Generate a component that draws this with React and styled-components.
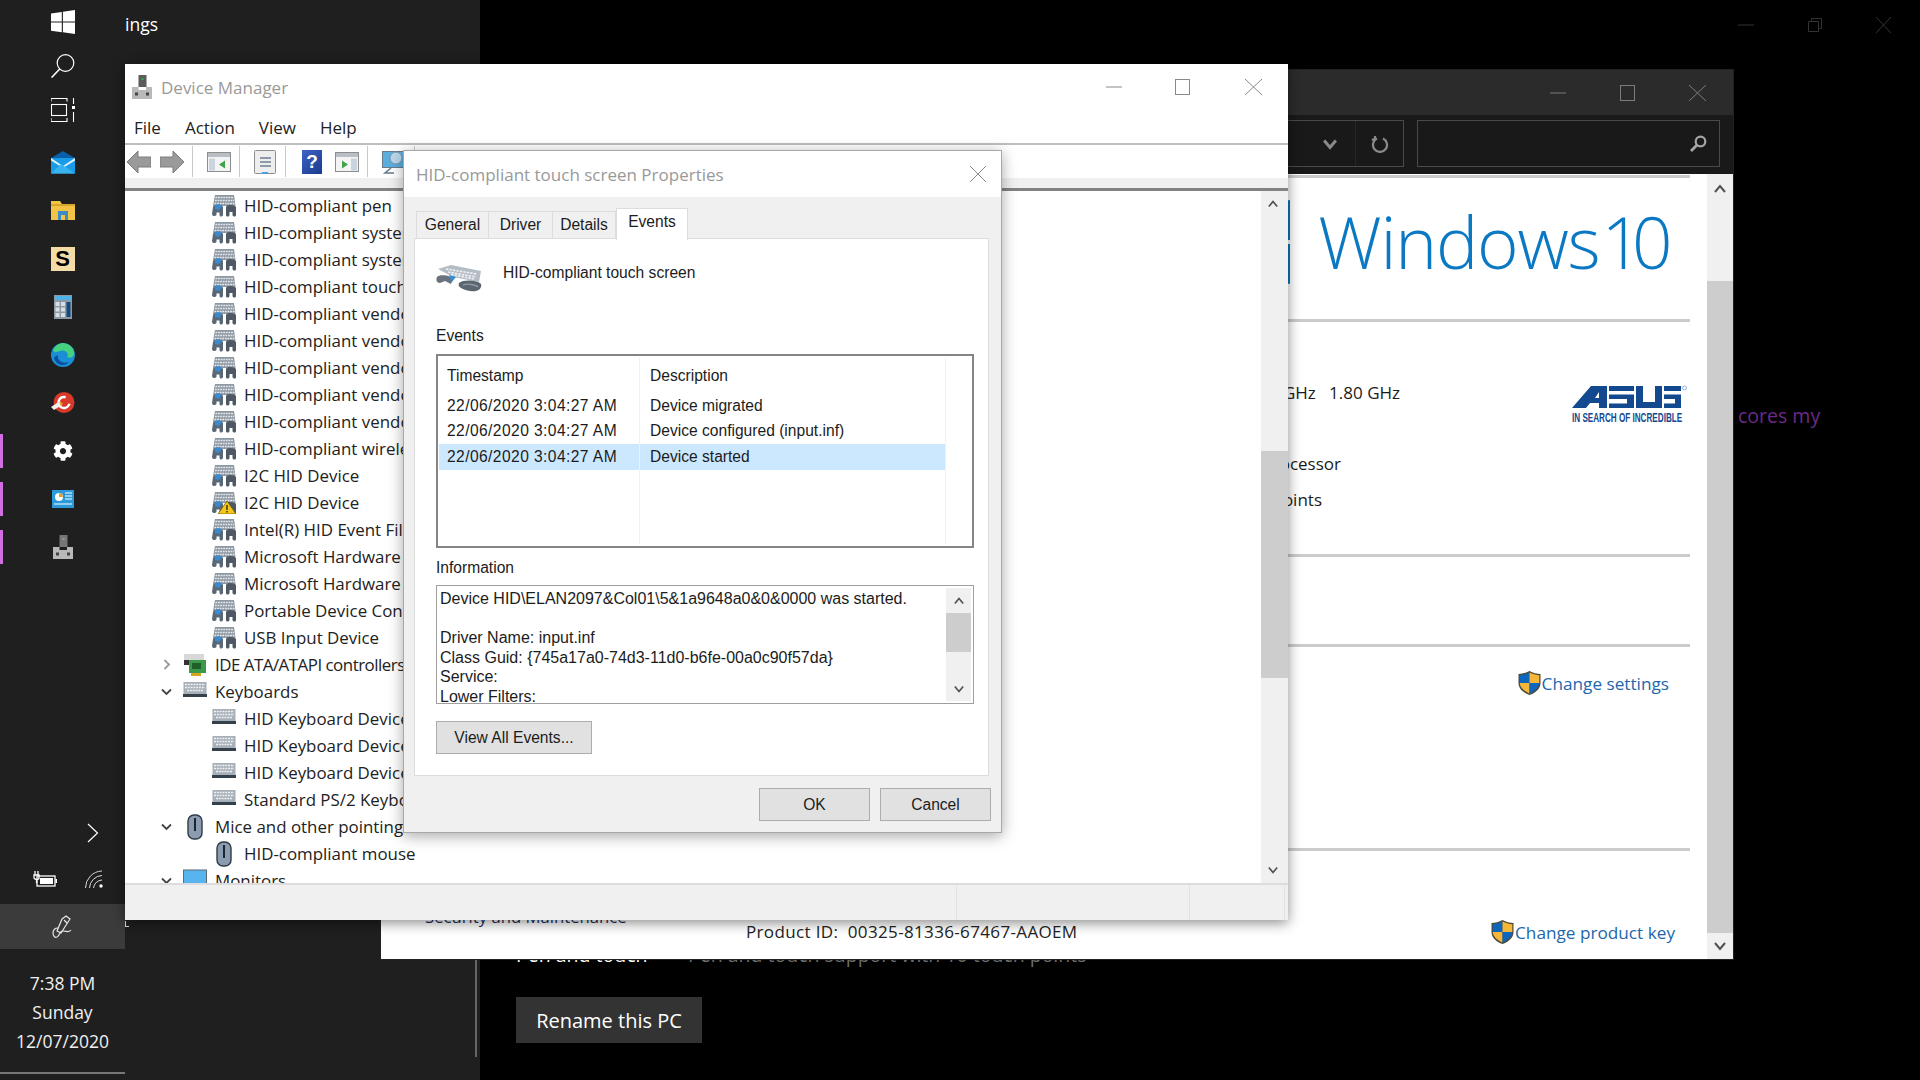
import React from 'react';
import styled, { createGlobalStyle } from 'styled-components';
import { FaCog } from 'react-icons/fa';

const GlobalStyle = createGlobalStyle`
  html, body {
    margin: 0;
    padding: 0;
    background: #000;
    overflow: hidden;
  }
  * {
    box-sizing: border-box;
  }
`;

const uiFont = `'Open Sans', 'Noto Sans', sans-serif`;
const dlgFont = `'Liberation Sans', Arial, sans-serif`;

const Desktop = styled.div`
  position: relative;
  display: flex;
  width: 1920px;
  height: 1080px;
  overflow: hidden;
  background: #000;
  font-family: ${uiFont};
`;

/* left taskbar */
const Taskbar = styled.div`
  display: flex;
  flex-direction: column;
  flex: 0 0 125px;
  background: #1f1f1f;
  color: #fff;
`;

const TaskItem = styled.div`
  position: relative;
  display: flex;
  align-items: center;
  justify-content: center;
  height: ${p => p.$h || 48}px;
  margin-top: ${p => p.$mt || 0}px;
  &::before {
    content: '';
    display: ${p => (p.$open ? 'block' : 'none')};
    position: absolute;
    left: 0;
    top: 7px;
    width: 3px;
    height: 34px;
    background: #d26fe0;
  }
`;

const ScrabbleTile = styled.span`
  display: flex;
  align-items: center;
  justify-content: center;
  width: 24px;
  height: 24px;
  background: #f3dca6;
  color: #000;
  font: bold 22px ${dlgFont};
`;

const TraySpacer = styled.div`
  flex: 1;
`;

const ExpandRow = styled.div`
  display: flex;
  justify-content: flex-end;
  padding-right: 26px;
  height: 24px;
  margin-top: 1px;
  align-items: center;
`;

const TrayRow = styled.div`
  display: flex;
  justify-content: space-between;
  align-items: center;
  padding: 0 22px 0 33px;
  margin-top: 22px;
  height: 24px;
`;

const PenButton = styled.div`
  display: flex;
  align-items: center;
  justify-content: center;
  height: 45px;
  margin-top: 13px;
  background: #3b3b3b;
`;

const Clock = styled.div`
  display: flex;
  flex-direction: column;
  align-items: center;
  padding-top: 20px;
  height: 123px;
  font-size: 17.5px;
  line-height: 29px;
  color: #f0f0f0;
`;

const ClockRule = styled.div`
  height: 2px;
  margin-bottom: 6px;
  background: #777;
`;

/* settings sidebar behind the windows */
const SettingsNav = styled.div`
  position: relative;
  flex: 0 0 355px;
  background: #1f1f1f;
  color: #fff;
`;

const NavTitle = styled.div`
  padding-top: 10px;
  font-size: 17.5px;
  line-height: 28px;
`;

const NavCrumb = styled.div`
  position: absolute;
  left: 0;
  top: 921px;
  width: 4px;
  height: 6px;
  border-left: 1px solid #ddd;
  border-bottom: 1px solid #ddd;
`;

const NavRule = styled.div`
  position: absolute;
  right: 3px;
  bottom: 23px;
  width: 2px;
  height: 110px;
  background: #666;
`;

const SettingsMain = styled.div`
  flex: 1;
  display: flex;
  flex-direction: column;
  padding-left: 36px;
  color: #fff;
`;

const MainControls = styled.div`
  display: flex;
  justify-content: flex-end;
  align-items: center;
  gap: 54px;
  height: 50px;
  padding-right: 29px;
  color: #333;
`;

const CoresNote = styled.div`
  margin: 352px 0 0 1222px;
  font-size: 19.5px;
  line-height: 28px;
  color: #6b2a8a;
  white-space: nowrap;
`;

const SpecLine = styled.div`
  display: flex;
  margin-top: 510px;
  height: 28px;
  align-items: center;
  font-size: 19.5px;
  white-space: nowrap;
`;

const SpecKey = styled.span`
  width: 172px;
`;

const SpecValue = styled.span`
  color: #6e6e6e;
`;

const RenameButton = styled.div`
  display: flex;
  align-items: center;
  justify-content: center;
  width: 186px;
  height: 46px;
  margin-top: 29px;
  background: #333;
  font-size: 20px;
`;

/* system window */
const SystemWindow = styled.div`
  position: absolute;
  left: 381px;
  top: 70px;
  width: 1352px;
  height: 889px;
  display: flex;
  flex-direction: column;
  background: #fff;
  box-shadow: 0 0 0 1px #222;
`;

const DarkTitle = styled.div`
  display: flex;
  justify-content: flex-end;
  align-items: center;
  gap: 54px;
  height: 45px;
  padding-right: 27px;
  background: #2b2b2b;
  color: #7c7c7c;
`;

const AddressBar = styled.div`
  display: flex;
  justify-content: flex-end;
  align-items: center;
  gap: 13px;
  height: 59px;
  padding: 0 13px 2px 0;
  background: #191919;
`;

const AddressBox = styled.div`
  display: flex;
  justify-content: flex-end;
  align-items: center;
  width: 900px;
  height: 47px;
  border: 1px solid #4a4a4a;
  color: #8a8a8a;
`;

const AddressButton = styled.div`
  display: flex;
  align-items: center;
  justify-content: center;
  width: ${p => p.$w}px;
  height: 100%;
  border-left: ${p => (p.$split ? '1px solid #262626' : '0')};
`;

const SearchBox = styled(AddressBox)`
  width: 303px;
  padding-right: 12px;
`;

const SystemBody = styled.div`
  flex: 1;
  display: flex;
  min-height: 0;
`;

const SystemContent = styled.div`
  flex: 1;
  display: flex;
  flex-direction: column;
  padding: 1px 17px 0 0;
`;

const SystemSection = styled.div`
  display: flex;
  height: ${p => p.$h}px;
  flex: ${p => (p.$grow ? 1 : 'none')};
  border-top: 3px solid #cbcbcb;
`;

const BrandRow = styled(SystemSection)`
  justify-content: flex-end;
  align-items: center;
  gap: 28px;
  padding: 0 20px 14px 0;
`;

const BrandText = styled.div`
  display: flex;
  font-weight: 300;
  font-size: 71px;
  letter-spacing: -1.2px;
  line-height: 80px;
  color: #0a78c2;
  white-space: nowrap;
`;

const BrandNumber = styled.span`
  margin-left: 2px;
  letter-spacing: -10px;
  margin-right: 7.5px;
`;

const FactsColumn = styled.div`
  flex: 1;
  display: flex;
  flex-direction: column;
  padding-top: 58px;
  font-size: 17px;
  color: #1b1b1b;
`;

const FactRow = styled.div`
  width: ${p => p.$end}px;
  height: 26px;
  margin-bottom: ${p => p.$mb || 0}px;
  line-height: 26px;
  text-align: right;
  white-space: nowrap;
`;

const AsusBlock = styled.div`
  display: flex;
  flex-direction: column;
  width: 118px;
  margin: 63px 0 0 0;
  color: #12498f;
`;

const AsusTagline = styled.span`
  display: block;
  width: 110px;
  margin-top: 3px;
  font: bold 12.5px/12px ${dlgFont};
  white-space: nowrap;
  transform: scaleX(0.65);
  transform-origin: left center;
`;

const LinkRow = styled.div`
  display: flex;
  justify-content: flex-end;
  align-items: center;
  gap: 1px;
  height: 28px;
  margin-left: auto;
  margin-right: ${p => p.$right}px;
  margin-top: ${p => p.$top}px;
  color: #2166ad;
  font-size: 17.2px;
  white-space: nowrap;
`;

const ProductBlock = styled.div`
  display: flex;
  flex-direction: column;
  padding: 53px 0 0 44px;
  font-size: 17px;
  color: #232323;
`;

const SecurityText = styled.span`
  color: #27305a;
  font-size: 16.7px;
  line-height: 26px;
  height: 16px;
`;

const ProductText = styled.span`
  margin-left: 321px;
  letter-spacing: 0.35px;
  white-space: nowrap;
`;

const PageScrollbar = styled.div`
  display: flex;
  flex-direction: column;
  flex: 0 0 26px;
  background: #f0f0f0;
  color: #505050;
`;

const ScrollArrow = styled.div`
  display: flex;
  align-items: center;
  justify-content: center;
  flex: 0 0 ${p => p.$h || 26}px;
  padding-right: ${p => p.$shift || 0}px;
`;

const ScrollTrack = styled.div`
  flex: 1;
  padding-top: ${p => p.$top || 0}px;
  padding-bottom: ${p => p.$bottom || 0}px;
  display: flex;
`;

const ScrollThumb = styled.div`
  flex: 1;
  background: #cdcdcd;
`;

/* device manager */
const DeviceWindow = styled.div`
  position: absolute;
  left: 125px;
  top: 64px;
  width: 1163px;
  height: 856px;
  display: flex;
  flex-direction: column;
  background: #fff;
  box-shadow: 0 3px 12px rgba(0, 0, 0, 0.45);
`;

const LightTitle = styled.div`
  display: flex;
  align-items: center;
  height: ${p => p.$h}px;
  padding-left: ${p => p.$pad}px;
  flex: none;
  color: #999;
  font-size: 17px;
  background: #fff;
  white-space: nowrap;
`;

const TitleText = styled.span`
  flex: 1;
  margin-left: 9px;
`;

const WinControls = styled.div`
  display: flex;
  align-items: center;
  gap: 53px;
  padding-right: ${p => p.$right}px;
  color: #8a8a8a;
`;

const CloseSlot = styled.span`
  display: flex;
  margin-left: ${p => p.$lead || 0}px;
`;

const MenuBar = styled.div`
  display: flex;
  align-items: center;
  height: 33px;
  padding: 1px 0 0 9px;
  gap: 24px;
  font-size: 17px;
  color: #222;
`;

const Toolbar = styled.div`
  display: flex;
  align-items: center;
  flex: none;
  height: 35px;
  padding-left: 2px;
  border-top: 2px solid #bdbdbd;
`;

const ToolGroup = styled.div`
  display: flex;
  align-items: center;
  gap: ${p => p.$gap || 13}px;
  height: 31px;
  padding-right: ${p => p.$pad || 8}px;
  margin-right: 14px;
  border-right: 1px solid #c9c9c9;
`;

const HelpTile = styled.span`
  display: flex;
  align-items: center;
  justify-content: center;
  width: 20px;
  height: 24px;
  margin-left: 2px;
  background: linear-gradient(135deg, #3d63c4, #1c3a8e);
  color: #fff;
  font: bold 19px ${dlgFont};
`;

const ToolbarBand = styled.div`
  flex: none;
  height: 13px;
  background: #f0f0f0;
  border-bottom: 3px solid #828282;
`;

const TreeArea = styled.div`
  flex: 1;
  display: flex;
  min-height: 0;
`;

const TreeList = styled.div`
  flex: 1;
  padding-top: 1px;
  overflow: hidden;
`;

const TreeRow = styled.div`
  display: flex;
  align-items: center;
  height: 27px;
  padding-left: ${p => (p.$parent ? 35 : 87)}px;
  gap: 8px;
  font-size: 16.9px;
  letter-spacing: ${p => (p.$tight ? -0.5 : 0)}px;
  color: #222;
  white-space: nowrap;
`;

const Chevron = styled.span`
  display: flex;
  justify-content: center;
  width: 13px;
  margin-right: 2px;
  color: ${p => (p.$closed ? '#9a9a9a' : '#444')};
`;

const TreeScrollbar = styled(PageScrollbar)`
  flex-basis: 27px;
`;

const StatusBar = styled.div`
  display: grid;
  grid-template-columns: 832px 233px 95px 1fr;
  flex: none;
  height: 37px;
  background: #f0f0f0;
  border-top: 2px solid #dcdcdc;
`;

const StatusCell = styled.div`
  border-right: 1px solid #e2e2e2;
`;

/* properties dialog */
const PropsDialog = styled.div`
  position: absolute;
  left: 403px;
  top: 150px;
  width: 599px;
  height: 683px;
  display: flex;
  flex-direction: column;
  background: #f0f0f0;
  border: 1px solid #a8a8a8;
  box-shadow: 0 3px 14px rgba(0, 0, 0, 0.35);
  font-family: ${dlgFont};
  font-size: 15.6px;
  color: #1c1c1c;
`;

const DialogTitle = styled.span`
  flex: 1;
  font-family: ${uiFont};
`;

const TabStrip = styled.div`
  display: flex;
  align-items: flex-end;
  flex: none;
  height: 41px;
  padding-left: 12px;
`;

const Tab = styled.div`
  display: flex;
  align-items: center;
  justify-content: center;
  width: ${p => p.$w}px;
  height: ${p => (p.$active ? 32 : 27)}px;
  margin-bottom: ${p => (p.$active ? -2 : 0)}px;
  padding-bottom: ${p => (p.$active ? 6 : 0)}px;
  background: ${p => (p.$active ? '#fff' : '#f0f0f0')};
  border: 1px solid #dcdcdc;
  border-bottom: 0;
  border-left-width: ${p => (p.$first || p.$active ? 1 : 0)}px;
  position: relative;
  z-index: ${p => (p.$active ? 1 : 0)};
`;

const TabPanel = styled.div`
  flex: none;
  height: 538px;
  margin: 0 12px 0 10px;
  padding: 25px 14px 0 21px;
  background: #fff;
  border: 1px solid #dcdcdc;
`;

const DeviceHead = styled.div`
  display: flex;
  gap: 21px;
  height: 63px;
`;

const FieldLabel = styled.div`
  height: 18px;
  line-height: 18px;
`;

const EventList = styled.div`
  display: flex;
  height: 194px;
  margin: 9px 0 11px;
  padding: 2px 26px 2px 1px;
  border: 2px solid #858585;
`;

const EventColumns = styled.div`
  flex: 1;
  display: flex;
  flex-direction: column;
  border-right: 1px solid #edf1f6;
`;

const EventRow = styled.div`
  display: flex;
  flex: ${p => (p.$fill ? 1 : 'none')};
  height: ${p => (p.$head ? '35px' : p.$fill ? 'auto' : '25.5px')};
  align-items: ${p => (p.$fill ? 'stretch' : 'center')};
  background: ${p => (p.$selected ? '#cce8ff' : 'transparent')};
`;

const EventCell = styled.div`
  display: flex;
  align-items: center;
  align-self: stretch;
  width: ${p => (p.$first ? 201 : 304)}px;
  padding-left: ${p => (p.$first ? 8 : 10)}px;
  border-right: ${p => (p.$first ? '1px solid #edf1f6' : '0')};
  white-space: nowrap;
`;

const StampText = styled.span`
  letter-spacing: 0.42px;
`;

const InfoBox = styled.div`
  display: flex;
  height: 119px;
  margin: 8px 0 17px;
  border: 1px solid #a0a0a0;
  overflow: hidden;
`;

const InfoText = styled.div`
  flex: 1;
  padding: 3px 0 0 3px;
  font-size: 16px;
  line-height: 19.5px;
  white-space: pre-line;
  overflow: hidden;
`;

const InfoScrollbar = styled(PageScrollbar)`
  flex-basis: 25px;
  margin: 2px 2px 2px 0;
`;

const DialogButton = styled.div`
  display: flex;
  align-items: center;
  justify-content: center;
  width: ${p => p.$w}px;
  height: 33px;
  background: #e1e1e1;
  border: 1px solid #adadad;
`;

const DialogFooter = styled.div`
  display: flex;
  justify-content: flex-end;
  gap: 10px;
  padding: 12px 10px 0 0;
`;

/* drawings */
const WindowsLogo = () => (
  <svg width="24" height="24" viewBox="0 0 24 24" fill="#fff">
    <path d="M0 3.4 10.8 1.9V11.4H0zM11.9 1.7 24 0V11.4H11.9zM0 12.6H10.8V22.2L0 20.7zM11.9 12.6H24V24L11.9 22.3z" />
  </svg>
);

const SearchIcon = () => (
  <svg width="24" height="24" viewBox="0 0 24 24" fill="none" stroke="#fff" strokeWidth="1.2">
    <circle cx="14.5" cy="9" r="8.3" />
    <path d="M8.7 15 .6 23.5" strokeWidth="1.6" />
  </svg>
);

const TaskViewIcon = () => (
  <svg width="24" height="24" viewBox="0 0 24 24" fill="none" stroke="#fff" strokeWidth="1.1">
    <path d="M0 3.5V.5H16V3.5M0 20V23.5H16V20" />
    <rect x=".5" y="6.5" width="15" height="11" />
    <path d="M22.5 0V6M22.5 14V24" />
    <rect x="21" y="8" width="3" height="3" fill="#fff" stroke="none" />
  </svg>
);

const MailIcon = () => (
  <svg width="24" height="24" viewBox="0 0 24 24">
    <path d="M12 0 24 7V10H0V7z" fill="#0a5fa8" />
    <rect y="7" width="24" height="15.5" fill="#1a9be8" />
    <path d="M0 7 12 15 24 7V9.5L12 17 0 9.5z" fill="#dff1fb" />
    <path d="M0 22.5 10 13 24 22.5z" fill="#38b3f0" />
  </svg>
);

const FolderIcon = () => (
  <svg width="24" height="20" viewBox="0 0 24 20">
    <path d="M0 0H9L11 3H24V19H0z" fill="#f2c344" />
    <rect y="3" width="24" height="2" fill="#d9a52a" />
    <path d="M7 10H17V19H14V14H10V19H7z" fill="#3b8bc6" />
  </svg>
);

const CalcIcon = () => (
  <svg width="18" height="24" viewBox="0 0 18 24">
    <rect width="18" height="24" fill="#8d9aa5" />
    <rect x="1" y="1" width="16" height="4" fill="#4fb3e6" />
    <g fill="#d7dee4">
      <rect x="1.5" y="7" width="4" height="4" />
      <rect x="7" y="7" width="4" height="4" />
      <rect x="1.5" y="12.5" width="4" height="4" />
      <rect x="7" y="12.5" width="4" height="4" />
      <rect x="1.5" y="18" width="4" height="4" />
      <rect x="7" y="18" width="4" height="4" />
    </g>
    <rect x="12.5" y="7" width="4" height="15" fill="#14497f" />
  </svg>
);

const EdgeIcon = () => (
  <svg width="24" height="24" viewBox="0 0 24 24">
    <circle cx="12" cy="12" r="12" fill="#1a8fd6" />
    <path d="M2 7A11 11 0 0 1 23 9C24 14 19 16 16 14 19 11 14 6 9 8 5 9.5 3.5 10 2 7z" fill="#46d17f" />
    <path d="M7 13C6 18 12 21 18 19 14 24 5 23 3 15 4 13 6 12 7 13z" fill="#0b4f9c" />
  </svg>
);

const CleanerIcon = () => (
  <svg width="24" height="24" viewBox="0 0 24 24">
    <circle cx="13" cy="11.5" r="10.5" fill="#d8392b" />
    <circle cx="13" cy="11.5" r="5.5" fill="none" stroke="#fff" strokeWidth="2.4" strokeDasharray="24 8" transform="rotate(30 13 11.5)" />
    <path d="M0 16 9 10 11 14 3 19z" fill="#f2efe9" />
    <path d="M8 11 12 12 10 15z" fill="#e6a11e" />
  </svg>
);

const PanelIcon = () => (
  <svg width="22" height="18" viewBox="0 0 22 18">
    <rect width="22" height="18" fill="#2c9ad8" />
    <circle cx="7" cy="7" r="4" fill="#fff" />
    <path d="M7 7V3A4 4 0 0 1 11 7z" fill="#e8a03a" />
    <path d="M13 3H20M13 6H20M13 9H20" stroke="#fff" strokeWidth="1.2" />
    <path d="M2 14H20" stroke="#dcefff" strokeWidth="1.2" />
  </svg>
);

const ManagerIcon = ({ dim }) => (
  <svg width="20" height="24" viewBox="0 0 20 24">
    <rect x="6.5" y="0" width="8" height="12" fill={dim ? '#5c5c5c' : '#777'} />
    <rect x="9.5" y="3" width="2" height="2" fill={dim ? '#3ba55c' : '#9a9a9a'} />
    <path d="M0 12H6.5V15H14V12H20V24H0z" fill="#b9b9b9" />
    <rect x="3" y="17.5" width="3" height="3" fill="#444" />
    <rect x="14" y="17.5" width="3" height="3" fill="#444" />
  </svg>
);

const ExpandIcon = () => (
  <svg width="12" height="20" viewBox="0 0 12 20" fill="none" stroke="#fff" strokeWidth="1.2">
    <path d="M1 1 10.5 10 1 19" />
  </svg>
);

const BatteryIcon = () => (
  <svg width="24" height="16" viewBox="0 0 24 16" fill="none" stroke="#fff" strokeWidth="1.3">
    <path d="M2 0V4M5 0V4M1 4H6V7C6 9 2 9 1 7zM3.5 8.5V12" />
    <rect x="4" y="5" width="18" height="10" />
    <rect x="7" y="7" width="13" height="6" fill="#fff" stroke="none" />
    <rect x="22.5" y="8" width="1.5" height="4" fill="#fff" stroke="none" />
  </svg>
);

const WifiIcon = () => (
  <svg width="18" height="18" viewBox="0 0 18 18" fill="none" stroke="#d8d8d8" strokeWidth="1">
    <path d="M.5 18A17 17 0 0 1 17 1M4.5 18A13 13 0 0 1 17 5.5M8.5 18A9 9 0 0 1 17 10" />
    <circle cx="16" cy="16" r="1.7" fill="#fff" stroke="none" />
  </svg>
);

const PenIcon = () => (
  <svg width="22" height="24" viewBox="0 0 22 24" fill="none" stroke="#e6e6e6" strokeWidth="1.2">
    <path d="M10 4 14 1 18 4 9 18 5 16z" />
    <path d="M12 5 15 8" />
    <path d="M6 13C3 13 1 15 1 18 1 21 3 23 5 22 8 21 7 16 11 16 15 16 17 18 19 15" />
  </svg>
);

const MinimizeGlyph = ({ w = 16 }) => (
  <svg width={w} height="16" viewBox={`0 0 ${w} 16`} stroke="currentColor" strokeWidth="1">
    <path d={`M0 8H${w}`} />
  </svg>
);

const MaximizeGlyph = ({ w = 15 }) => (
  <svg width={w} height="16" viewBox={`0 0 ${w} 16`} fill="none" stroke="currentColor" strokeWidth="1">
    <rect x=".5" y=".5" width={w - 1} height="15" />
  </svg>
);

const CloseGlyph = ({ w = 17 }) => (
  <svg width={w} height="16" viewBox={`0 0 ${w} 16`} fill="none" stroke="currentColor" strokeWidth="1">
    <path d={`M0 0 ${w} 16M${w} 0 0 16`} />
  </svg>
);

const RestoreGlyph = () => (
  <svg width="14" height="14" viewBox="0 0 14 14" fill="none" stroke="currentColor" strokeWidth="1">
    <path d="M.5 3.5H10.5V13.5H.5zM3.5 3.5V.5H13.5V10.5H10.5" />
  </svg>
);

const ChevronGlyph = ({ up, size = 12, width = 2 }) => (
  <svg width={size} height={size} viewBox="0 0 12 12" fill="none" stroke="currentColor" strokeWidth={width}>
    <path d={up ? 'M1 9 6 3 11 9' : 'M1 3 6 9 11 3'} />
  </svg>
);

const RefreshGlyph = () => (
  <svg width="18" height="18" viewBox="0 0 18 18" fill="none" stroke="currentColor" strokeWidth="2.2">
    <path d="M6 3.6A7 7 0 1 0 12 3.6M4 1V4.6H0.8" />
  </svg>
);

const LensGlyph = () => (
  <svg width="17" height="17" viewBox="0 0 17 17" fill="none" stroke="#a5a5a5" strokeWidth="2.2">
    <circle cx="10.5" cy="6.5" r="4.8" />
    <path d="M7 10 1 16" strokeWidth="2.8" />
  </svg>
);

const ShieldIcon = () => (
  <svg width="23" height="24" viewBox="0 0 23 24" style={{ flex: 'none' }}>
    <path d="M11.5 0C8 2 4 3 .5 3V12C.5 18 6 22 11.5 24 17 22 22.5 18 22.5 12V3C19 3 15 2 11.5 0z" fill="#4b4b3c" />
    <path d="M11.5 1.5C8.5 3 5 4 1.7 4.2V12H11.5z" fill="#0d66bd" />
    <path d="M11.5 1.5C14.5 3 18 4 21.3 4.2V12H11.5z" fill="#f6b637" />
    <path d="M1.7 12C2 17 7 20.5 11.5 22.5V12z" fill="#f6b637" />
    <path d="M21.3 12C21 17 16 20.5 11.5 22.5V12z" fill="#0d66bd" />
  </svg>
);

const FlagPiece = () => (
  <svg width="51" height="84" viewBox="0 0 51 84" fill="#0a78c2">
    <path d="M0 8 51 0V40H0zM0 44H51V84L0 76z" />
  </svg>
);

const AsusMark = () => (
  <svg width="115" height="24" viewBox="0 0 115 24" fill="#12498f">
    <path d="M0 23 19 1H35V23H27V18H18L14 23zM23 13H27V7z" />
    <path d="M37 1H62V6H37zM37 9.5H62V23H37V18.5H55V14H37z" />
    <path d="M64 1H71V17H83V1H90V23H64z" />
    <path d="M92 1H109V6H92zM92 9.5H109V23H92V18.5H103V14H92z" />
    <circle cx="112.5" cy="3" r="2" fill="none" stroke="#6f8fc0" strokeWidth=".7" />
  </svg>
);

const HidIcon = ({ warn }) => (
  <svg width="24" height="22" viewBox="0 0 24 22" style={{ flex: 'none' }}>
    <path d="M3 0H22L23.5 11H1z" fill="#8e98a2" />
    <path d="M3.5 2.5H21.5M3 5.5H22M2.5 8.5H22.5" stroke="#e6eaee" strokeWidth="1.4" strokeDasharray="1.8 .8" />
    <path d="M1 12C2 9 10 9 11 12V20C10 22 8 22 7.5 20V17.5H4.5V20C3 22 0 21 0 19z" fill="#5a6774" />
    <path d="M3 10C5 9 9 9 10 11L7 15 3 14z" fill="#3a8ad2" />
    <path d="M14 12C15 9 23 10 24 12V20C24 22 21 22 20.5 20V17H17.5V20C17 22 14 22 14 20z" fill="#4e5965" />
    {warn && <path d="M15 9 24 22H6z" fill="#f5c518" stroke="#6a5300" strokeWidth=".7" />}
    {warn && <path d="M15 13V18M15 19V20.5" stroke="#222" strokeWidth="1.3" />}
  </svg>
);

const TouchDeviceIcon = () => (
  <svg width="46" height="28" viewBox="0 0 46 28" style={{ flex: 'none' }}>
    <path d="M2 5 15 1 45 7 43 18 17 13z" fill="#b4bcc4" />
    <path d="M10 5 41 10M12 8 40 13M15 10.5 38 15" stroke="#eef1f4" strokeWidth="1.6" strokeDasharray="2.5 1" />
    <path d="M1 13C3 10 15 11 17 15L15 20 9 17 4 19C0 19 0 15 1 13z" fill="#68737e" />
    <path d="M13 11 20 13 16 18z" fill="#2f8fd8" />
    <path d="M23 19C27 15 42 16 45 20 46 23 44 26 40 27 36 28 28 26 25 24 23 23 22 21 23 19z" fill="#5b6671" />
    <path d="M27 21C31 19 40 21 42 23" stroke="#8d98a3" strokeWidth="1.4" fill="none" />
  </svg>
);

const KeyboardIcon = () => (
  <svg width="24" height="16" viewBox="0 0 24 16" style={{ flex: 'none', marginTop: -3 }}>
    <rect x=".5" y="0" width="23" height="12" fill="#a7b0b9" />
    <path d="M2 2.5H22M2 5.5H22M4 8.5H20" stroke="#eef1f4" strokeWidth="1.6" strokeDasharray="2 .8" />
    <rect y="12" width="24" height="3" fill="#34404a" />
  </svg>
);

const MouseIcon = () => (
  <svg width="24" height="26" viewBox="0 0 24 26" style={{ flex: 'none' }}>
    <rect x="5" y="1" width="14" height="24" rx="6" fill="#8b9cb0" stroke="#2f3945" strokeWidth="1.4" />
    <rect x="11" y="4" width="2" height="13" fill="#1d2630" />
  </svg>
);

const ControllerIcon = () => (
  <svg width="24" height="24" viewBox="0 0 24 24" style={{ flex: 'none' }}>
    <rect x="1" y="1" width="20" height="6" fill="#d8d8d8" />
    <rect x="1" y="7" width="5" height="5" fill="#333" />
    <rect x="6" y="7" width="17" height="13" fill="#3b9a4a" />
    <rect x="9" y="10" width="9" height="6" fill="#1f5f2a" />
    <rect x="8" y="20" width="10" height="3" fill="#d9a520" />
  </svg>
);

const MonitorIcon = () => (
  <svg width="24" height="24" viewBox="0 0 24 24" style={{ flex: 'none' }}>
    <rect x=".5" y="1" width="23" height="18" fill="#57b4ee" stroke="#5b6b78" />
  </svg>
);

const PaneTool = ({ play, side }) => (
  <svg width="24" height="20" viewBox="0 0 24 20">
    <rect x=".5" y=".5" width="23" height="19" fill="#f4f4f4" stroke="#8d8d8d" />
    <rect x="1" y="1" width="22" height="4" fill="#b9bec4" />
    <rect x={side ? 16 : 2} y="6.5" width="6" height="12" fill="#c9d4de" />
    <path d={play ? 'M7 8.5 13 12.5 7 16.5z' : 'M18 8.5 12 12.5 18 16.5z'} fill="#3fa34a" />
  </svg>
);

const ArrowTool = ({ right }) => (
  <svg width="24" height="22" viewBox="0 0 24 22" style={{ transform: right ? 'scaleX(-1)' : 'none' }}>
    <path d="M11 0V6H24V16H11V22L0 11z" fill="#9a9a9a" stroke="#7c7c7c" />
  </svg>
);

const SheetTool = () => (
  <svg width="22" height="24" viewBox="0 0 22 24">
    <rect x=".5" y=".5" width="21" height="23" rx="1" fill="#eee" stroke="#8d8d8d" />
    <path d="M6 8H17M6 12H17M6 16H17" stroke="#6d7f92" strokeWidth="1.6" />
    <rect x="8" y="22" width="6" height="2" fill="#4aa3df" />
  </svg>
);

const ScreenTool = () => (
  <svg width="24" height="24" viewBox="0 0 24 24">
    <rect x=".5" y="1.5" width="23" height="16" fill="#5aaee0" stroke="#6a7b8a" />
    <circle cx="14" cy="8" r="6" fill="#b9d8ec" stroke="#7f95a6" />
    <path d="M9 18 3 23H12" stroke="#6a7b8a" strokeWidth="1.6" fill="none" />
  </svg>
);

const TreeItem = ({ icon, children, parent, closed, tight }) => (
  <TreeRow $parent={parent} $tight={tight}>
    {parent && (
      <Chevron $closed={closed}>
        <svg width="11" height="11" viewBox="0 0 11 11" fill="none" stroke="currentColor" strokeWidth="1.8">
          <path d={closed ? 'M3.5 1 8 5.5 3.5 10' : 'M1 3.5 5.5 8 10 3.5'} />
        </svg>
      </Chevron>
    )}
    {icon}
    <span>{children}</span>
  </TreeRow>
);

const hidNames = [
  'HID-compliant pen',
  'HID-compliant system controller',
  'HID-compliant system controller',
  'HID-compliant touch screen',
  'HID-compliant vendor-defined device',
  'HID-compliant vendor-defined device',
  'HID-compliant vendor-defined device',
  'HID-compliant vendor-defined device',
  'HID-compliant vendor-defined device',
  'HID-compliant wireless radio controls',
  'I2C HID Device',
  'I2C HID Device',
  'Intel(R) HID Event Filter',
  'Microsoft Hardware USB Keyboard',
  'Microsoft Hardware USB Mouse',
  'Portable Device Control device',
  'USB Input Device',
];

const keyboardNames = [
  'HID Keyboard Device',
  'HID Keyboard Device',
  'HID Keyboard Device',
  'Standard PS/2 Keyboard',
];

const events = [
  ['22/06/2020 3:04:27 AM', 'Device migrated'],
  ['22/06/2020 3:04:27 AM', 'Device configured (input.inf)'],
  ['22/06/2020 3:04:27 AM', 'Device started'],
];

const infoText = `Device HID\\ELAN2097&Col01\\5&1a9648a0&0&0000 was started.

Driver Name: input.inf
Class Guid: {745a17a0-74d3-11d0-b6fe-00a0c90f57da}
Service:
Lower Filters:
Upper Filters:`;

const App = () => (
  <Desktop>
    <GlobalStyle />

    <Taskbar>
      <TaskItem $h={44}><WindowsLogo /></TaskItem>
      <TaskItem $h={44}><SearchIcon /></TaskItem>
      <TaskItem $h={44}><TaskViewIcon /></TaskItem>
      <TaskItem $mt={7}><MailIcon /></TaskItem>
      <TaskItem><FolderIcon /></TaskItem>
      <TaskItem><ScrabbleTile>S</ScrabbleTile></TaskItem>
      <TaskItem><CalcIcon /></TaskItem>
      <TaskItem><EdgeIcon /></TaskItem>
      <TaskItem><CleanerIcon /></TaskItem>
      <TaskItem $open><FaCog size={20} color="#fff" /></TaskItem>
      <TaskItem $open><PanelIcon /></TaskItem>
      <TaskItem $open><ManagerIcon /></TaskItem>
      <TraySpacer />
      <ExpandRow><ExpandIcon /></ExpandRow>
      <TrayRow><BatteryIcon /><WifiIcon /></TrayRow>
      <PenButton><PenIcon /></PenButton>
      <Clock>
        <span>7:38 PM</span>
        <span>Sunday</span>
        <span>12/07/2020</span>
      </Clock>
      <ClockRule />
    </Taskbar>

    <SettingsNav>
      <NavTitle>ings</NavTitle>
      <NavCrumb />
      <NavRule />
    </SettingsNav>

    <SettingsMain>
      <MainControls>
        <MinimizeGlyph />
        <RestoreGlyph />
        <CloseGlyph w={15} />
      </MainControls>
      <CoresNote>cores my</CoresNote>
      <SpecLine>
        <SpecKey>Pen and touch</SpecKey>
        <SpecValue>Pen and touch support with 10 touch points</SpecValue>
      </SpecLine>
      <RenameButton>Rename this PC</RenameButton>
    </SettingsMain>

    <SystemWindow>
      <DarkTitle>
        <MinimizeGlyph />
        <MaximizeGlyph />
        <CloseGlyph />
      </DarkTitle>
      <AddressBar>
        <AddressBox>
          <AddressButton $w={50}><ChevronGlyph size={14} width={2.6} /></AddressButton>
          <AddressButton $w={48} $split><RefreshGlyph /></AddressButton>
        </AddressBox>
        <SearchBox><LensGlyph /></SearchBox>
      </AddressBar>
      <SystemBody>
        <SystemContent>
          <BrandRow $h={144}>
            <FlagPiece />
            <BrandText>
              <span>Windows</span>
              <BrandNumber>10</BrandNumber>
            </BrandText>
          </BrandRow>
          <SystemSection $h={235}>
            <FactsColumn>
              <FactRow $end={1019} $mb={45}>Intel(R) Core(TM) i5-8265U CPU @ 1.60GHz&nbsp;&nbsp; 1.80 GHz</FactRow>
              <FactRow $end={960} $mb={10}>64-bit Operating System, x64-based processor</FactRow>
              <FactRow $end={941}>Pen and touch support with 10 touch points</FactRow>
            </FactsColumn>
            <AsusBlock>
              <AsusMark />
              <AsusTagline>IN SEARCH OF INCREDIBLE</AsusTagline>
            </AsusBlock>
          </SystemSection>
          <SystemSection $h={90} />
          <SystemSection $h={204}>
            <LinkRow $top={22} $right={21}>
              <ShieldIcon />
              <span>Change settings</span>
            </LinkRow>
          </SystemSection>
          <SystemSection $grow>
            <ProductBlock>
              <SecurityText>Security and Maintenance</SecurityText>
              <ProductText>Product ID:&nbsp; 00325-81336-67467-AAOEM</ProductText>
            </ProductBlock>
            <LinkRow $top={67} $right={15}>
              <ShieldIcon />
              <span>Change product key</span>
            </LinkRow>
          </SystemSection>
        </SystemContent>
        <PageScrollbar>
          <ScrollArrow $h={29}><ChevronGlyph up /></ScrollArrow>
          <ScrollTrack $top={78}><ScrollThumb /></ScrollTrack>
          <ScrollArrow><ChevronGlyph /></ScrollArrow>
        </PageScrollbar>
      </SystemBody>
    </SystemWindow>

    <DeviceWindow>
      <LightTitle $h={46} $pad={7}>
        <ManagerIcon dim />
        <TitleText>Device Manager</TitleText>
        <WinControls $right={26}>
          <MinimizeGlyph />
          <MaximizeGlyph />
          <CloseSlot $lead={2}><CloseGlyph /></CloseSlot>
        </WinControls>
      </LightTitle>
      <MenuBar>
        <span>File</span>
        <span>Action</span>
        <span>View</span>
        <span>Help</span>
      </MenuBar>
      <Toolbar>
        <ToolGroup $gap={9}>
          <ArrowTool />
          <ArrowTool right />
        </ToolGroup>
        <ToolGroup><PaneTool /></ToolGroup>
        <ToolGroup $pad={9}><SheetTool /></ToolGroup>
        <ToolGroup>
          <HelpTile>?</HelpTile>
          <PaneTool play side />
        </ToolGroup>
        <ToolGroup><ScreenTool /></ToolGroup>
      </Toolbar>
      <ToolbarBand />
      <TreeArea>
        <TreeList>
          {hidNames.map((name, i) => (
            <TreeItem key={i} icon={<HidIcon warn={i === 11} />}>{name}</TreeItem>
          ))}
          <TreeItem parent closed tight icon={<ControllerIcon />}>IDE ATA/ATAPI controllers</TreeItem>
          <TreeItem parent icon={<KeyboardIcon />}>Keyboards</TreeItem>
          {keyboardNames.map((name, i) => (
            <TreeItem key={i} icon={<KeyboardIcon />}>{name}</TreeItem>
          ))}
          <TreeItem parent icon={<MouseIcon />}>Mice and other pointing devices</TreeItem>
          <TreeItem icon={<MouseIcon />}>HID-compliant mouse</TreeItem>
          <TreeItem parent icon={<MonitorIcon />}>Monitors</TreeItem>
        </TreeList>
        <TreeScrollbar>
          <ScrollArrow $shift={4}><ChevronGlyph up size={10} /></ScrollArrow>
          <ScrollTrack $top={234} $bottom={179}><ScrollThumb /></ScrollTrack>
          <ScrollArrow $shift={4}><ChevronGlyph size={10} /></ScrollArrow>
        </TreeScrollbar>
      </TreeArea>
      <StatusBar>
        <StatusCell />
        <StatusCell />
        <StatusCell />
      </StatusBar>
    </DeviceWindow>

    <PropsDialog>
      <LightTitle $h={46} $pad={12}>
        <DialogTitle>HID-compliant touch screen Properties</DialogTitle>
        <WinControls $right={15}><CloseGlyph w={16} /></WinControls>
      </LightTitle>
      <TabStrip>
        <Tab $w={73} $first>General</Tab>
        <Tab $w={64}>Driver</Tab>
        <Tab $w={63}>Details</Tab>
        <Tab $w={72} $active>Events</Tab>
      </TabStrip>
      <TabPanel>
        <DeviceHead>
          <TouchDeviceIcon />
          <span>HID-compliant touch screen</span>
        </DeviceHead>
        <FieldLabel>Events</FieldLabel>
        <EventList>
          <EventColumns>
            <EventRow $head>
              <EventCell $first>Timestamp</EventCell>
              <EventCell>Description</EventCell>
            </EventRow>
            {events.map(([stamp, text], i) => (
              <EventRow key={i} $selected={i === 2}>
                <EventCell $first><StampText>{stamp}</StampText></EventCell>
                <EventCell>{text}</EventCell>
              </EventRow>
            ))}
            <EventRow $fill>
              <EventCell $first />
              <EventCell />
            </EventRow>
          </EventColumns>
        </EventList>
        <FieldLabel>Information</FieldLabel>
        <InfoBox>
          <InfoText>{infoText}</InfoText>
          <InfoScrollbar>
            <ScrollArrow $h={25}><ChevronGlyph up size={10} /></ScrollArrow>
            <ScrollTrack $bottom={24}><ScrollThumb /></ScrollTrack>
            <ScrollArrow $h={25}><ChevronGlyph size={10} /></ScrollArrow>
          </InfoScrollbar>
        </InfoBox>
        <DialogButton $w={156}>View All Events...</DialogButton>
      </TabPanel>
      <DialogFooter>
        <DialogButton $w={111}>OK</DialogButton>
        <DialogButton $w={111}>Cancel</DialogButton>
      </DialogFooter>
    </PropsDialog>
  </Desktop>
);

export default App;
